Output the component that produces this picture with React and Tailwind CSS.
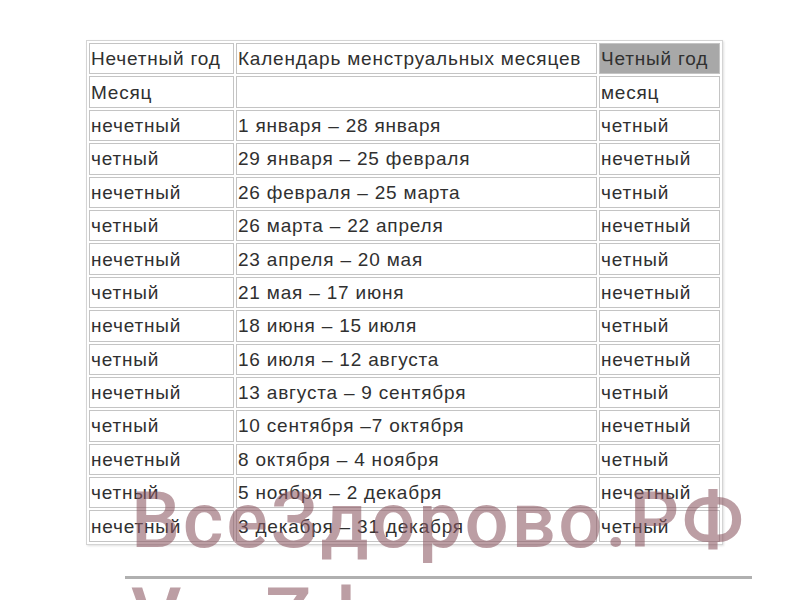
import React from 'react';

const rows = [
  ['нечетный', '1 января – 28 января', 'четный'],
  ['четный', '29 января – 25 февраля', 'нечетный'],
  ['нечетный', '26 февраля – 25 марта', 'четный'],
  ['четный', '26 марта – 22 апреля', 'нечетный'],
  ['нечетный', '23 апреля – 20 мая', 'четный'],
  ['четный', '21 мая – 17 июня', 'нечетный'],
  ['нечетный', '18 июня – 15 июля', 'четный'],
  ['четный', '16 июля – 12 августа', 'нечетный'],
  ['нечетный', '13 августа – 9 сентября', 'четный'],
  ['четный', '10 сентября –7 октября', 'нечетный'],
  ['нечетный', '8 октября – 4 ноября', 'четный'],
  ['четный', '5 ноября – 2 декабря', 'нечетный'],
  ['нечетный', '3 декабря – 31 декабря', 'четный'],
];

function Cell({ children, className = '' }) {
  return (
    <td className={`h-[31.4px] border border-[#c4c4c4] pl-px pr-0 py-0 align-middle whitespace-nowrap ${className}`}>
      {children}
    </td>
  );
}

export default function App() {
  return (
    <div className="relative w-[800px] h-[600px] overflow-hidden bg-white font-['Liberation_Sans',Arial,sans-serif] text-[#303030]">
      <div className="pt-[40px] pl-[86px]">
        <table className="border-separate border-spacing-[2px] border border-[#d4d4d4] text-[19px] leading-none tracking-[0.8px] shadow-[1px_1px_2px_rgba(0,0,0,0.12)]">
          <tbody>
            <tr>
              <Cell className="w-[145px]">Нечетный год</Cell>
              <Cell className="w-[361px]">Календарь менструальных месяцев</Cell>
              <Cell className="w-[121px] bg-[#a8a8a8]">Четный год</Cell>
            </tr>
            <tr>
              <Cell>Месяц</Cell>
              <Cell></Cell>
              <Cell>месяц</Cell>
            </tr>
            {rows.map((r, i) => (
              <tr key={i}>
                <Cell>{r[0]}</Cell>
                <Cell>{r[1]}</Cell>
                <Cell>{r[2]}</Cell>
              </tr>
            ))}
          </tbody>
        </table>
      </div>

      {/* watermark */}
      <div className="pointer-events-none absolute left-[131px] top-[482px] font-['Roboto',sans-serif] text-[78px] font-medium leading-none tracking-[2.6px] text-[rgba(140,88,98,0.58)] whitespace-nowrap">
        ВсеЗдорово.РФ
      </div>
      <div className="pointer-events-none absolute left-[125px] top-[576px] w-[627px] h-[3px] bg-[#b0b0b0]" />
      <div className="pointer-events-none absolute left-[131px] top-[578px] font-['Roboto',sans-serif] text-[78px] font-medium leading-none tracking-[0.5px] text-[rgba(140,88,98,0.58)] whitespace-nowrap">
        VseZdorovo.ru
      </div>
    </div>
  );
}
